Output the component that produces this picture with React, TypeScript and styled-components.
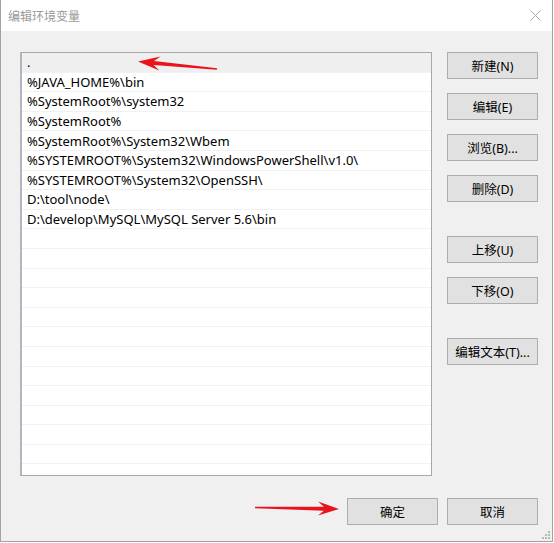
import React from "react";
import styled, { createGlobalStyle } from "styled-components";

const GlobalStyle = createGlobalStyle`
  html, body { margin: 0; padding: 0; background: #ffffff; }
  body { font-family: "Noto Sans", "Noto Sans CJK SC", sans-serif; }
  * { box-sizing: border-box; }
`;

const Window = styled.div`
  position: relative;
  width: 553px;
  height: 542px;
  border: 1px solid #a3a3a3;
  border-top: none;
  display: flex;
  flex-direction: column;
  background: #f0f0f0;
  overflow: hidden;
`;

const TitleBar = styled.div`
  height: 31px;
  flex: none;
  background: #ffffff;
  display: flex;
  align-items: center;
  justify-content: space-between;
  padding: 0 10px 0 7px;
`;

const Title = styled.div`
  font-family: "Noto Sans CJK SC", sans-serif;
  font-size: 12px;
  color: #9a9a9a;
  line-height: 1;
  margin-top: 1px;
`;

const CloseIcon = styled.svg`
  width: 11px;
  height: 11px;
  margin-right: 1px;
`;

const Body = styled.div`
  flex: 1;
  display: flex;
  flex-direction: column;
  padding: 21px 14px 16px 19px;
`;

const MainRow = styled.div`
  display: flex;
  gap: 15px;
  height: 424px;
`;

const ListBox = styled.div`
  flex: 1;
  background: #ffffff;
  border: 1px solid #a8a8a8;
  border-left: 2px solid #b4b4be;
  overflow: hidden;
`;

const Row = styled.div<{ $selected?: boolean }>`
  height: 19.6px;
  display: flex;
  align-items: center;
  padding-left: 5px;
  font-size: 13px;
  color: #000000;
  white-space: nowrap;
  background: ${(p) => (p.$selected ? "#efefef" : "#ffffff")};
  border-bottom: 1px solid #f1f1f1;
`;

const ButtonColumn = styled.div`
  width: 91px;
  flex: none;
  display: flex;
  flex-direction: column;
`;

const Button = styled.div<{ $gapBefore?: number }>`
  height: 27px;
  width: 91px;
  flex: none;
  margin-top: ${(p) => p.$gapBefore ?? 0}px;
  background: #e1e1e1;
  border: 1px solid #adadad;
  display: flex;
  align-items: center;
  justify-content: center;
  font-family: "Noto Sans", "Noto Sans CJK SC", sans-serif;
  font-size: 12.5px;
  color: #000000;
`;

const Footer = styled.div`
  margin-top: 22px;
  display: flex;
  justify-content: flex-end;
  gap: 9px;
`;

const Overlay = styled.svg`
  position: absolute;
  left: -1px;
  top: 0;
  width: 554px;
  height: 543px;
  pointer-events: none;
`;

const Grip = styled.svg`
  position: absolute;
  right: 1px;
  bottom: 1px;
  width: 10px;
  height: 10px;
`;

type Pt = [number, number];

function arrow(tail: Pt, tip: Pt, headLen: number, headW: number, tailW: number, neckW: number): string {
  const dx = tip[0] - tail[0];
  const dy = tip[1] - tail[1];
  const len = Math.hypot(dx, dy);
  const ux = dx / len;
  const uy = dy / len;
  const nx = -uy;
  const ny = ux;
  const barb: Pt = [tip[0] - ux * headLen, tip[1] - uy * headLen];
  const neck: Pt = [tip[0] - ux * headLen * 0.72, tip[1] - uy * headLen * 0.72];
  const pts: Pt[] = [
    [tail[0] + nx * tailW / 2, tail[1] + ny * tailW / 2],
    [neck[0] + nx * neckW / 2, neck[1] + ny * neckW / 2],
    [barb[0] + nx * headW / 2, barb[1] + ny * headW / 2],
    tip,
    [barb[0] - nx * headW / 2, barb[1] - ny * headW / 2],
    [neck[0] - nx * neckW / 2, neck[1] - ny * neckW / 2],
    [tail[0] - nx * tailW / 2, tail[1] - ny * tailW / 2],
  ];
  return pts.map((p) => `${p[0].toFixed(1)},${p[1].toFixed(1)}`).join(" ");
}

const paths = [
  ".",
  "%JAVA_HOME%\\bin",
  "%SystemRoot%\\system32",
  "%SystemRoot%",
  "%SystemRoot%\\System32\\Wbem",
  "%SYSTEMROOT%\\System32\\WindowsPowerShell\\v1.0\\",
  "%SYSTEMROOT%\\System32\\OpenSSH\\",
  "D:\\tool\\node\\",
  "D:\\develop\\MySQL\\MySQL Server 5.6\\bin",
];

const rows = Array.from({ length: 22 }, (_, i) => paths[i] ?? "");

const sideButtons: { label: string; gap: number }[] = [
  { label: "新建(N)", gap: 0 },
  { label: "编辑(E)", gap: 14 },
  { label: "浏览(B)...", gap: 14 },
  { label: "删除(D)", gap: 14 },
  { label: "上移(U)", gap: 34 },
  { label: "下移(O)", gap: 14 },
  { label: "编辑文本(T)...", gap: 34 },
];

export default function App() {
  return (
    <>
      <GlobalStyle />
      <Window>
        <TitleBar>
          <Title>编辑环境变量</Title>
          <CloseIcon viewBox="0 0 11 11">
            <path d="M0.5 0.5 L10.5 10.5 M10.5 0.5 L0.5 10.5" stroke="#a8a8a8" strokeWidth="1" fill="none" />
          </CloseIcon>
        </TitleBar>
        <Body>
          <MainRow>
            <ListBox>
              {rows.map((r, i) => (
                <Row key={i} $selected={i === 0}>
                  {r}
                </Row>
              ))}
            </ListBox>
            <ButtonColumn>
              {sideButtons.map((b) => (
                <Button key={b.label} $gapBefore={b.gap}>
                  {b.label}
                </Button>
              ))}
            </ButtonColumn>
          </MainRow>
          <Footer>
            <Button>确定</Button>
            <Button>取消</Button>
          </Footer>
        </Body>
        <Grip viewBox="0 0 10 10">
          {[
            [7, 1],
            [4, 4],
            [7, 4],
            [1, 7],
            [4, 7],
            [7, 7],
          ].map(([x, y], i) => (
            <rect key={i} x={x} y={y} width="2" height="2" fill="#b8b8b8" />
          ))}
        </Grip>
        <Overlay viewBox="0 0 554 543">
          <polygon points={arrow([217, 69], [138, 61.5], 22, 14, 1.5, 4)} fill="#e8141c" />
          <polygon points={arrow([255, 507.5], [339, 509], 21, 14, 1.5, 4)} fill="#e8141c" />
        </Overlay>
      </Window>
    </>
  );
}
